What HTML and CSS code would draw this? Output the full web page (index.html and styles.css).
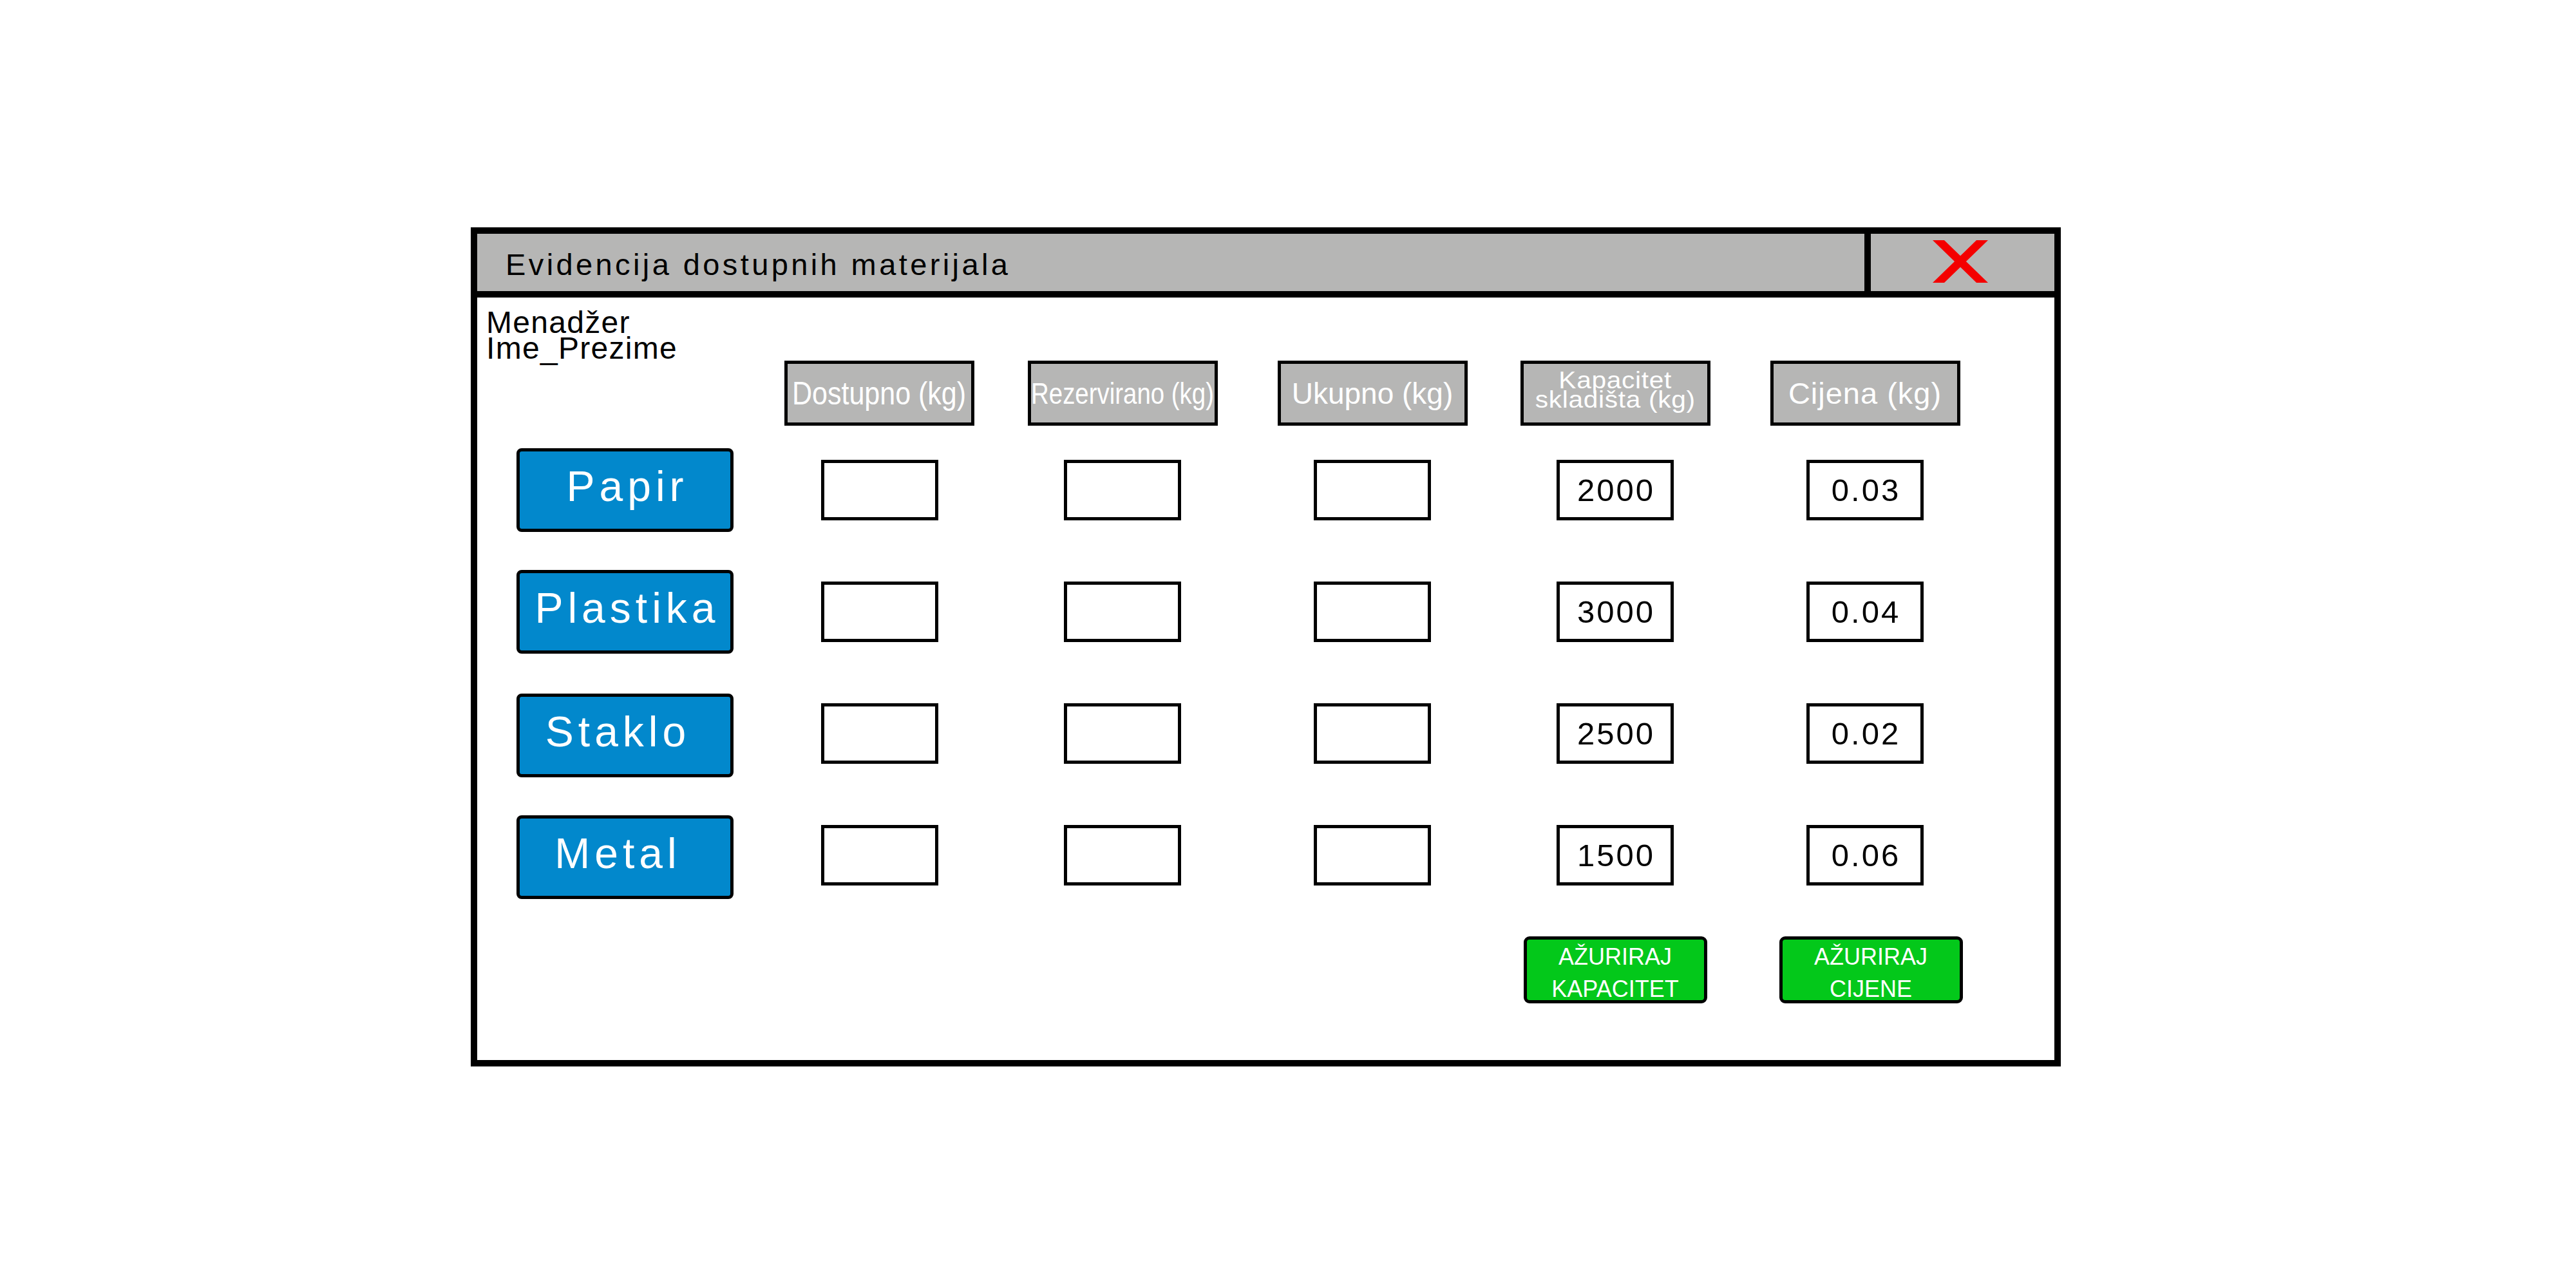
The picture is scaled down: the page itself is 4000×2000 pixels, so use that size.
FILE: index.html
```html
<!DOCTYPE html>
<html>

<head>
    <title>Evidencija dostupnih materijala</title>
    <meta charset="utf-8">
    <link rel="stylesheet" href="styles.css">
</head>

<body>
    <div class="window">
        <div class="titleBar">
            <div class="windowTitle">Evidencija dostupnih materijala</div>
            <div class="closeBtn">
                <svg width="88" height="66" viewBox="0 0 88 66">
                    <polygon points="1,0 19,0 87,66 69,66" fill="#f40000" />
                    <polygon points="69,0 87,0 19,66 1,66" fill="#f40000" />
                </svg>
            </div>
        </div>
        <div class="windowBody">
            <div class="userInfo">Menadžer<br />Ime_Prezime</div>
            <div class="materialGrid">
                <div></div>
                <div class="colHeader"><span class="headDostupno">Dostupno (kg)</span></div>
                <div class="colHeader"><span class="headRezervirano">Rezervirano (kg)</span></div>
                <div class="colHeader"><span class="headUkupno">Ukupno (kg)</span></div>
                <div class="colHeader"><span class="headKapacitet">Kapacitet<br />skladišta (kg)</span></div>
                <div class="colHeader"><span class="headCijena">Cijena (kg)</span></div>

                <button class="materialBtn">Papir</button>
                <input class="amount" type="text" />
                <input class="amount" type="text" />
                <input class="amount" type="text" />
                <input class="amount" type="text" value="2000" />
                <input class="amount" type="text" value="0.03" />

                <button class="materialBtn">Plastika</button>
                <input class="amount" type="text" />
                <input class="amount" type="text" />
                <input class="amount" type="text" />
                <input class="amount" type="text" value="3000" />
                <input class="amount" type="text" value="0.04" />

                <button class="materialBtn materialBtnLow">Staklo</button>
                <input class="amount" type="text" />
                <input class="amount" type="text" />
                <input class="amount" type="text" />
                <input class="amount" type="text" value="2500" />
                <input class="amount" type="text" value="0.02" />

                <button class="materialBtn materialBtnLow">Metal</button>
                <input class="amount" type="text" />
                <input class="amount" type="text" />
                <input class="amount" type="text" />
                <input class="amount" type="text" value="1500" />
                <input class="amount" type="text" value="0.06" />

                <button class="updateBtn updateCapacity">AŽURIRAJ<br />KAPACITET</button>
                <button class="updateBtn updatePrice">AŽURIRAJ<br />CIJENE</button>
            </div>
        </div>
    </div>
</body>

</html>
```

FILE: styles.css
```css
body {
    margin: 0;
    padding: 353px 0 0 731px;
    font-family: "Liberation Sans", Arial, sans-serif;
    background-color: #fff;
}

.window {
    width: 2469px;
    height: 1303px;
    box-sizing: border-box;
    border: 10px solid #000;
}

.titleBar {
    display: flex;
    height: 99px;
    box-sizing: border-box;
    border-bottom: 10px solid #000;
    background-color: #b6b6b5;
}

.windowTitle {
    flex: 1;
    display: flex;
    align-items: center;
    padding: 5px 0 0 44px;
    font-size: 47px;
    letter-spacing: 4.4px;
    color: #000;
}

.closeBtn {
    width: 295px;
    box-sizing: border-box;
    border-left: 10px solid #000;
    display: flex;
    align-items: center;
    justify-content: center;
    padding: 0 8px 4px 0;
}

.windowBody {
    padding: 19px 0 0 14px;
}

.userInfo {
    font-size: 48px;
    line-height: 40px;
    height: 80px;
    letter-spacing: 1.3px;
    color: #000;
}

.materialGrid {
    display: grid;
    grid-template-columns: 372px 383px 372px 404px 350px 426px;
    grid-template-rows: 106px repeat(4, 189px) 136px;
    justify-items: center;
    align-items: center;
    margin: -1px 0 0 47px;
}

.colHeader {
    align-self: start;
    width: 295px;
    height: 101px;
    box-sizing: border-box;
    border: 5px solid #000;
    background-color: #b6b6b5;
    color: #fff;
    display: flex;
    align-items: center;
    justify-content: center;
    white-space: nowrap;
}

.colHeader span {
    display: inline-block;
}

.headDostupno {
    font-size: 50px;
    transform: scaleX(0.86);
}

.headRezervirano {
    font-size: 46px;
    transform: scaleX(0.835);
}

.headUkupno {
    font-size: 46px;
}

.headKapacitet {
    font-size: 37px;
    line-height: 30px;
    letter-spacing: 0.6px;
    text-align: center;
    padding-bottom: 10px;
    transform: scaleX(1.1);
}

.headCijena {
    font-size: 47px;
    letter-spacing: 1px;
}

.materialBtn {
    justify-self: start;
    width: 337px;
    height: 130px;
    box-sizing: border-box;
    border: 5px solid #000;
    border-radius: 8px;
    background-color: #0288cc;
    color: #fff;
    font-family: "Liberation Sans", Arial, sans-serif;
    font-size: 66px;
    letter-spacing: 7px;
    padding: 0 0 11px 7px;
}

.materialBtnLow {
    margin-top: 6px;
    padding: 0 22px 11px 0;
}

.amount {
    width: 182px;
    height: 94px;
    box-sizing: border-box;
    border: 5px solid #000;
    padding: 0 0 0 3px;
    font-family: "Liberation Sans", Arial, sans-serif;
    font-size: 49px;
    letter-spacing: 3px;
    text-align: center;
    color: #000;
    background-color: #fff;
    outline: none;
}

.updateBtn {
    align-self: end;
    width: 285px;
    height: 104px;
    box-sizing: border-box;
    border: 5px solid #000;
    border-radius: 9px;
    background-color: #03c81a;
    color: #fff;
    font-family: "Liberation Sans", Arial, sans-serif;
    font-size: 36px;
    line-height: 50px;
    padding: 2px 0 0 0;
}

.updateCapacity {
    grid-column: 5;
}

.updatePrice {
    grid-column: 6;
    margin-left: 18px;
}
```
